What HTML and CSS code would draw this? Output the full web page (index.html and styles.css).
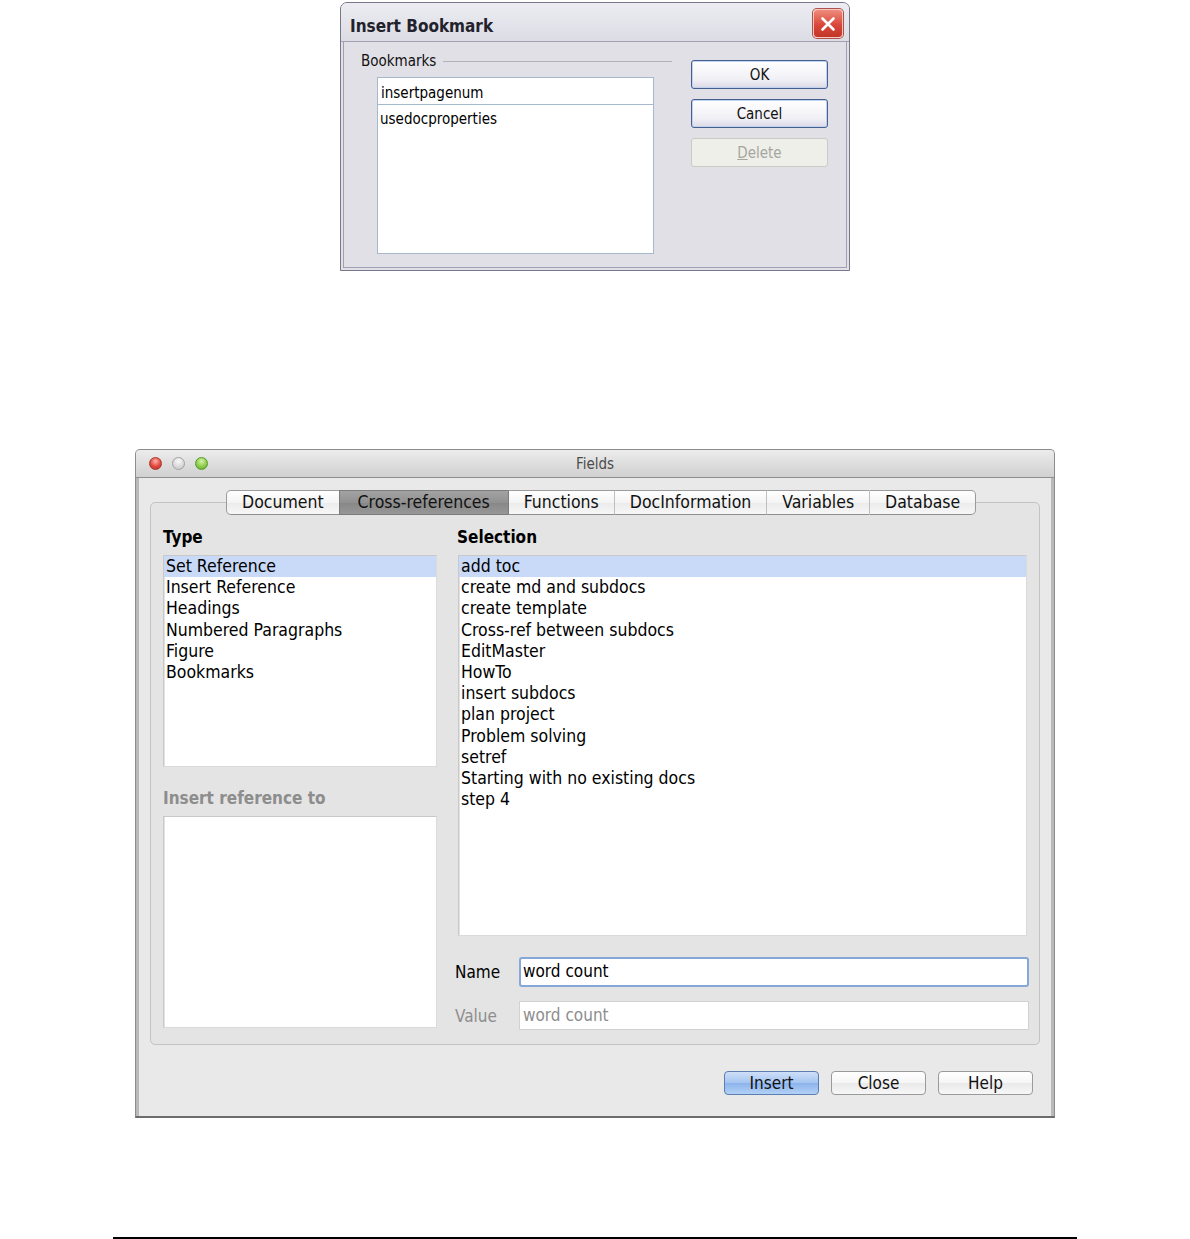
FILE: index.html
```html
<!DOCTYPE html>
<html>
<head>
    <title>Insert Bookmark / Fields</title>
    <link rel="stylesheet" href="styles.css">
</head>
<body>

    <div class="bm-dialog">
        <div class="bm-title">
            <span class="bm-title-text">Insert Bookmark</span>
            <span class="bm-close">
                <svg width="20" height="20" viewBox="0 0 20 20"><path d="M4.5 4.5 L15.5 15.5 M15.5 4.5 L4.5 15.5" stroke="#fff" stroke-width="2.6" stroke-linecap="round"/></svg>
            </span>
        </div>
        <div class="bm-body">
            <div class="bm-left">
                <div class="bm-legend"><span>Bookmarks</span><span class="bm-rule"></span></div>
                <div class="bm-input">insertpagenum</div>
                <div class="bm-list">
                    <div class="bm-item">usedocproperties</div>
                </div>
            </div>
            <div class="bm-buttons">
                <button class="xp-btn">OK</button>
                <button class="xp-btn">Cancel</button>
                <button class="xp-btn xp-disabled"><u>D</u>elete</button>
            </div>
        </div>
    </div>

    <div class="fd-dialog">
        <div class="fd-title">
            <div class="fd-lights">
                <span class="light light-red"></span>
                <span class="light light-grey"></span>
                <span class="light light-green"></span>
            </div>
            <div class="fd-caption">Fields</div>
            <div></div>
        </div>
        <div class="fd-body">
            <div class="fd-tabs">
                <span class="fd-tab">Document</span>
                <span class="fd-tab active">Cross-references</span>
                <span class="fd-tab">Functions</span>
                <span class="fd-tab">DocInformation</span>
                <span class="fd-tab">Variables</span>
                <span class="fd-tab">Database</span>
            </div>
            <div class="fd-group">
                <div class="fd-col fd-col-left">
                    <div class="fd-label">Type</div>
                    <div class="fd-list fd-type-list">
                        <div class="fd-item selected">Set Reference</div>
                        <div class="fd-item">Insert Reference</div>
                        <div class="fd-item">Headings</div>
                        <div class="fd-item">Numbered Paragraphs</div>
                        <div class="fd-item">Figure</div>
                        <div class="fd-item">Bookmarks</div>
                    </div>
                    <div class="fd-label fd-label-off fd-label-gap">Insert reference to</div>
                    <div class="fd-list fd-ref-list"></div>
                </div>
                <div class="fd-col fd-col-right">
                    <div class="fd-label fd-label-sel">Selection</div>
                    <div class="fd-list fd-sel-list">
                        <div class="fd-item selected">add toc</div>
                        <div class="fd-item">create md and subdocs</div>
                        <div class="fd-item">create template</div>
                        <div class="fd-item">Cross-ref between subdocs</div>
                        <div class="fd-item">EditMaster</div>
                        <div class="fd-item">HowTo</div>
                        <div class="fd-item">insert subdocs</div>
                        <div class="fd-item">plan project</div>
                        <div class="fd-item">Problem solving</div>
                        <div class="fd-item">setref</div>
                        <div class="fd-item">Starting with no existing docs</div>
                        <div class="fd-item">step 4</div>
                    </div>
                    <div class="fd-row fd-row-name">
                        <span class="fd-row-label">Name</span>
                        <div class="fd-input fd-input-focus">word count</div>
                    </div>
                    <div class="fd-row fd-row-value">
                        <span class="fd-row-label">Value</span>
                        <div class="fd-input fd-input-off">word count</div>
                    </div>
                </div>
            </div>
            <div class="fd-buttons">
                <button class="aqua-btn aqua-default">Insert</button>
                <button class="aqua-btn">Close</button>
                <button class="aqua-btn">Help</button>
            </div>
        </div>
    </div>

    <div class="page-rule"></div>

</body>
</html>
```

FILE: styles.css
```css
body {
    margin: 0;
    background-color: #fff;
    font-family: "DejaVu Sans Condensed", "DejaVu Sans", sans-serif;
    font-stretch: condensed;
    color: #000;
}

/* Insert Bookmark (XP style) */

.bm-dialog {
    width: 510px;
    height: 269px;
    margin: 2px auto 0;
    box-sizing: border-box;
    border: 1px solid #77778a;
    border-radius: 7px 7px 0 0;
    background-color: #e1e0e7;
    display: flex;
    flex-direction: column;
}

.bm-title {
    height: 36px;
    border-bottom: 1px solid #a2a2b2;
    border-radius: 6px 6px 0 0;
    background: linear-gradient(#ececf2, #dcdce5);
    display: flex;
    align-items: center;
    justify-content: space-between;
    padding: 2px 6px 0 9px;
    font-weight: bold;
    font-size: 17px;
    color: #22222c;
}

.bm-title-text {
    padding-top: 5px;
}

.bm-close {
    width: 28px;
    height: 27px;
    margin-top: 1px;
    border: 1px solid #f4c8c0;
    border-radius: 4px;
    background: linear-gradient(#ee8c7c, #d9483a 55%, #c23428);
    box-shadow: 0 0 0 1px #b05048;
    display: flex;
    align-items: center;
    justify-content: center;
}

.bm-body {
    flex: 1;
    margin: 0 2px 2px;
    border: 1px solid #a0a0b2;
    border-top: none;
    display: flex;
    font-size: 15px;
}

.bm-left {
    width: 328px;
    box-sizing: border-box;
    padding: 10px 0 0 17px;
}

.bm-legend {
    display: flex;
    align-items: center;
    gap: 7px;
    line-height: 18px;
    color: #111;
}

.bm-rule {
    flex: 1;
    height: 1px;
    background-color: #b2b2bc;
}

.bm-input {
    margin: 7px 0 0 16px;
    width: 277px;
    height: 28px;
    box-sizing: border-box;
    border: 1px solid #a6b8cd;
    background-color: #fff;
    padding: 2px 0 0 3px;
    line-height: 27px;
}

.bm-list {
    margin-left: 16px;
    width: 277px;
    height: 149px;
    box-sizing: border-box;
    border: 1px solid #a6b8cd;
    border-top: none;
    background-color: #fff;
}

.bm-item {
    padding: 2px 0 0 2px;
    line-height: 24px;
}

.bm-buttons {
    margin-left: 19px;
    padding-top: 18px;
    display: flex;
    flex-direction: column;
    gap: 10px;
}

.xp-btn {
    width: 137px;
    height: 29px;
    border: 1px solid #43608e;
    border-radius: 3px;
    background: linear-gradient(#ffffff, #f0eff5 70%, #dcdae6);
    box-shadow: inset 0 0 0 1px #c2d2ee;
    font-family: inherit;
    font-stretch: condensed;
    font-size: 15px;
    color: #111;
    padding: 0;
}

.xp-disabled {
    border-color: #cbcbc4;
    background: #efefea;
    box-shadow: none;
    color: #a6a6a0;
}

.xp-disabled u {
    text-decoration-color: #a6a6a0;
}

/* Fields (Aqua style) */

.fd-dialog {
    width: 920px;
    margin: 178px auto 0;
    box-sizing: border-box;
    border: 1px solid #8c8c8c;
    border-bottom: 2px solid #6c6c6c;
    border-radius: 5px 5px 0 0;
    background-color: #e9e9e9;
    box-shadow: inset 3px 0 0 #b9b9b9, inset -3px 0 0 #b9b9b9;
}

.fd-title {
    height: 27px;
    border-bottom: 1px solid #8f8f8f;
    border-radius: 4px 4px 0 0;
    background: linear-gradient(#ececec, #d0d0d0);
    display: grid;
    grid-template-columns: 1fr auto 1fr;
    align-items: center;
}

.fd-lights {
    display: flex;
    gap: 10px;
    padding-left: 13px;
}

.light {
    width: 13px;
    height: 13px;
    border-radius: 50%;
    box-sizing: border-box;
}

.light-red {
    border: 1px solid #a8342e;
    background: radial-gradient(circle at 50% 30%, #fbb3ac, #e2463d 55%, #b9302a);
}

.light-grey {
    border: 1px solid #a2a2a2;
    background: radial-gradient(circle at 50% 30%, #fafafa, #d9d9d9 55%, #c4c4c4);
}

.light-green {
    border: 1px solid #5a9a2c;
    background: radial-gradient(circle at 50% 30%, #d4f2a6, #8ccd4c 55%, #5f9e2a);
}

.fd-caption {
    font-size: 15px;
    color: #4c4c4c;
}

.fd-body {
    padding: 12px 14px 21px;
}

.fd-tabs {
    display: flex;
    padding-left: 76px;
    position: relative;
    z-index: 1;
}

.fd-tab {
    height: 25px;
    box-sizing: border-box;
    border-top: 1px solid #9c9c9c;
    border-bottom: 1px solid #8e8e8e;
    border-left: 1px solid #c0c0c0;
    background: linear-gradient(#ffffff, #f4f4f4 50%, #ebebeb 51%, #f7f7f7);
    padding: 0 15px;
    font-size: 17.5px;
    line-height: 23px;
    color: #111;
}

.fd-tab:first-child {
    border-left-color: #9a9a9a;
    border-radius: 5px 0 0 5px;
}

.fd-tab:last-child {
    border-right: 1px solid #9a9a9a;
    border-radius: 0 5px 5px 0;
}

.fd-tab.active {
    border-color: #7c7c7c;
    background: linear-gradient(#a3a3a3, #919191 50%, #878787 51%, #979797);
    padding: 0 18px;
}

.fd-tab.active + .fd-tab {
    border-left-color: #7c7c7c;
}

.fd-group {
    margin-top: -13px;
    border: 1px solid #c3c3c3;
    border-radius: 5px;
    background-color: #e4e4e4;
    padding: 24px 10px 14px 12px;
    display: flex;
    gap: 18px;
    align-items: flex-start;
}

.fd-col {
    display: flex;
    flex-direction: column;
}

.fd-col-left {
    width: 274px;
}

.fd-col-right {
    width: 574px;
}

.fd-label {
    font-size: 17px;
    font-weight: bold;
    line-height: 20px;
    margin-bottom: 8px;
}

.fd-label-sel {
    padding-left: 2px;
}

.fd-label-off {
    color: #8d8d8d;
}

.fd-label-gap {
    margin-top: 21px;
}

.fd-list {
    box-sizing: border-box;
    border: 1px solid #c9c9c9;
    border-right-color: #dadada;
    border-bottom-color: #dadada;
    background-color: #fff;
    box-shadow: inset 1px 0 0 #e2e2e2;
}

.fd-type-list,
.fd-ref-list {
    height: 212px;
}

.fd-sel-list {
    height: 381px;
    margin: 0 2px 0 3px;
}

.fd-item {
    padding-left: 2px;
    font-size: 17.5px;
    line-height: 21.2px;
    white-space: nowrap;
}

.fd-item.selected {
    background-color: #c8daf8;
}

.fd-row {
    display: flex;
    align-items: center;
}

.fd-row-name {
    margin-top: 21px;
    height: 30px;
}

.fd-row-value {
    margin-top: 14px;
    height: 29px;
}

.fd-row-label {
    width: 64px;
    font-size: 17px;
}

.fd-row-value .fd-row-label {
    color: #8d8d8d;
}

.fd-input {
    width: 510px;
    box-sizing: border-box;
    background-color: #fff;
    font-size: 17px;
}

.fd-input-focus {
    height: 30px;
    border: 2px solid #86a7da;
    border-radius: 3px;
    padding-left: 2px;
    line-height: 25px;
}

.fd-input-off {
    height: 29px;
    border: 1px solid #d2d2d2;
    padding-left: 3px;
    line-height: 26px;
    color: #8d8d8d;
}

.fd-buttons {
    margin-top: 26px;
    padding-right: 7px;
    display: flex;
    justify-content: flex-end;
    gap: 12px;
}

.aqua-btn {
    width: 95px;
    height: 24px;
    border: 1px solid #9a9a9a;
    border-radius: 4px;
    background: linear-gradient(#ffffff, #f5f5f5 50%, #e9e9e9 51%, #f7f7f7);
    font-family: inherit;
    font-stretch: condensed;
    font-size: 17px;
    color: #111;
    padding: 0;
    line-height: 22px;
}

.aqua-default {
    border-color: #5c7cb2;
    background: linear-gradient(#cfe0f8, #a4c4f0 50%, #8cb3ec 51%, #b2d1f6);
}

.page-rule {
    width: 964px;
    height: 2px;
    margin: 119px auto 0;
    background-color: #000;
}
```
